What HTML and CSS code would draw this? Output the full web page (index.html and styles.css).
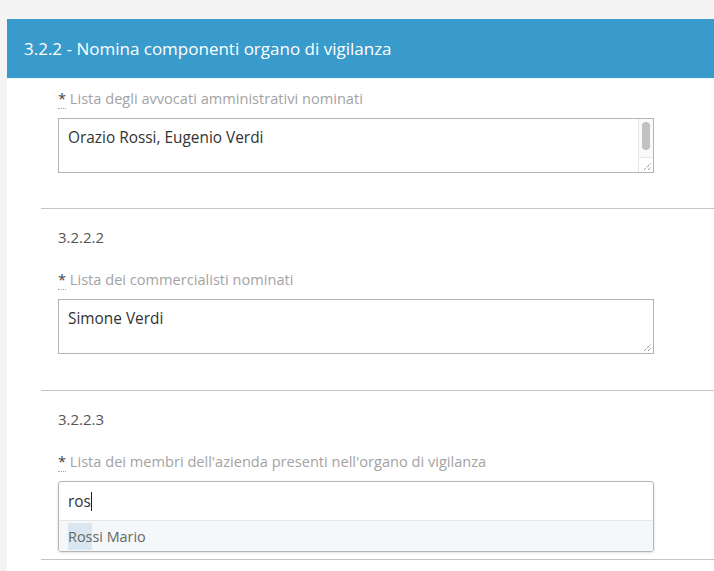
FILE: index.html
```html
<!DOCTYPE html>
<html lang="it">
<head>
<meta charset="utf-8">
<title>Nomina componenti organo di vigilanza</title>
<link rel="stylesheet" href="styles.css">
</head>
<body>
<div class="panel">
  <div class="panel-header">3.2.2 - Nomina componenti organo di vigilanza</div>
  <div class="panel-body">
    <div class="group group-first">
      <div class="field">
        <div class="label"><abbr class="req">*</abbr> Lista degli avvocati amministrativi nominati</div>
        <div class="textarea">
          <span class="value">Orazio Rossi, Eugenio Verdi</span>
          <div class="scrollbar"><div class="thumb"></div></div>
          <div class="corner">
            <svg class="grip" width="9" height="9" viewBox="0 0 9 9"><path d="M1 8 L8 1 M5 8 L8 5" stroke="#666" stroke-width="1" stroke-dasharray="1 1" fill="none"/></svg>
          </div>
        </div>
      </div>
    </div>
    <div class="group">
      <div class="field">
        <div class="num">3.2.2.2</div>
        <div class="label"><abbr class="req">*</abbr> Lista dei commercialisti nominati</div>
        <div class="textarea">
          <span class="value">Simone Verdi</span>
          <svg class="grip" width="9" height="9" viewBox="0 0 9 9"><path d="M1 8 L8 1 M5 8 L8 5" stroke="#666" stroke-width="1" stroke-dasharray="1 1" fill="none"/></svg>
        </div>
      </div>
    </div>
    <div class="group">
      <div class="field field-last">
        <div class="num">3.2.2.3</div>
        <div class="label"><abbr class="req">*</abbr> Lista dei membri dell'azienda presenti nell'organo di vigilanza</div>
        <div class="combo">
          <div class="input"><span class="value">ros</span><span class="caret"></span></div>
          <div class="menu"><div class="option"><mark class="hl">Ros</mark>si Mario</div></div>
        </div>
      </div>
    </div>
  </div>
</div>
</body>
</html>
```
FILE: styles.css
```css
html, body {
  margin: 0;
  padding: 0;
}
body {
  background: #f4f4f4;
  font-family: "Open Sans", "Liberation Sans", sans-serif;
  padding: 19px 0 0 7px;
  height: 552px;
  overflow: hidden;
}
.panel {
  background: #fff;
  min-height: 560px;
}
.panel-header {
  background: #389bcb;
  color: #fff;
  height: 60px;
  display: flex;
  align-items: center;
  padding-left: 17px;
  font-size: 17px;
  border-bottom: 1px solid #eef6fb;
  box-sizing: border-box;
}
.panel-body {
  padding-left: 34px;
}
.group {
  border-bottom: 1px solid #c4c4c4;
}
.group-first .field {
  padding-top: 9px;
  padding-bottom: 35px;
}
.field {
  padding: 18px 60px 36px 17px;
}
.field-last {
  padding-bottom: 7px;
}
.num {
  font-size: 15px;
  color: #555;
  line-height: 20px;
  margin-bottom: 22px;
}
.label {
  font-size: 14.6px;
  color: #a3a3a3;
  line-height: 20px;
  margin-bottom: 10px;
}
.req {
  color: #444;
  text-decoration: none;
  border-bottom: 1px dotted #aaa;
}
.textarea {
  position: relative;
  border: 1px solid #b5b5b5;
  height: 55px;
  box-sizing: border-box;
  padding: 9px 9px;
  font-size: 15.4px;
  line-height: 20px;
  color: #333;
}
.scrollbar {
  position: absolute;
  top: 0;
  right: 0;
  width: 15px;
  height: 39px;
  background: #fafafa;
  border-left: 1px solid #e6e6e6;
  box-sizing: border-box;
}
.thumb {
  position: absolute;
  left: 3px;
  top: 3px;
  width: 8px;
  height: 28px;
  border-radius: 4px;
  background: #c2c2c2;
}
.corner {
  position: absolute;
  right: 0;
  bottom: 0;
  width: 15px;
  height: 15px;
  border-left: 1px solid #e6e6e6;
  border-top: 1px solid #e6e6e6;
  background: #fff;
  box-sizing: border-box;
}
.grip {
  position: absolute;
  right: 1px;
  bottom: 1px;
}
.combo {
  position: relative;
  border: 1px solid #b5b5b5;
  border-radius: 3px;
  box-shadow: 0 1px 3px rgba(0,0,0,0.12);
  overflow: hidden;
}
.input {
  height: 38px;
  display: flex;
  align-items: center;
  padding-left: 9px;
  font-size: 15.4px;
  color: #333;
  border-bottom: 1px solid #e6e6e6;
}
.caret {
  display: inline-block;
  width: 1px;
  height: 19px;
  background: #222;
}
.menu {
  background: #f4f8fb;
}
.option {
  height: 30px;
  display: flex;
  align-items: center;
  padding-left: 9px;
  font-size: 14.4px;
  color: #666;
}
.hl {
  background: #dae7f0;
  color: #666;
  padding: 4px 0;
}
```
